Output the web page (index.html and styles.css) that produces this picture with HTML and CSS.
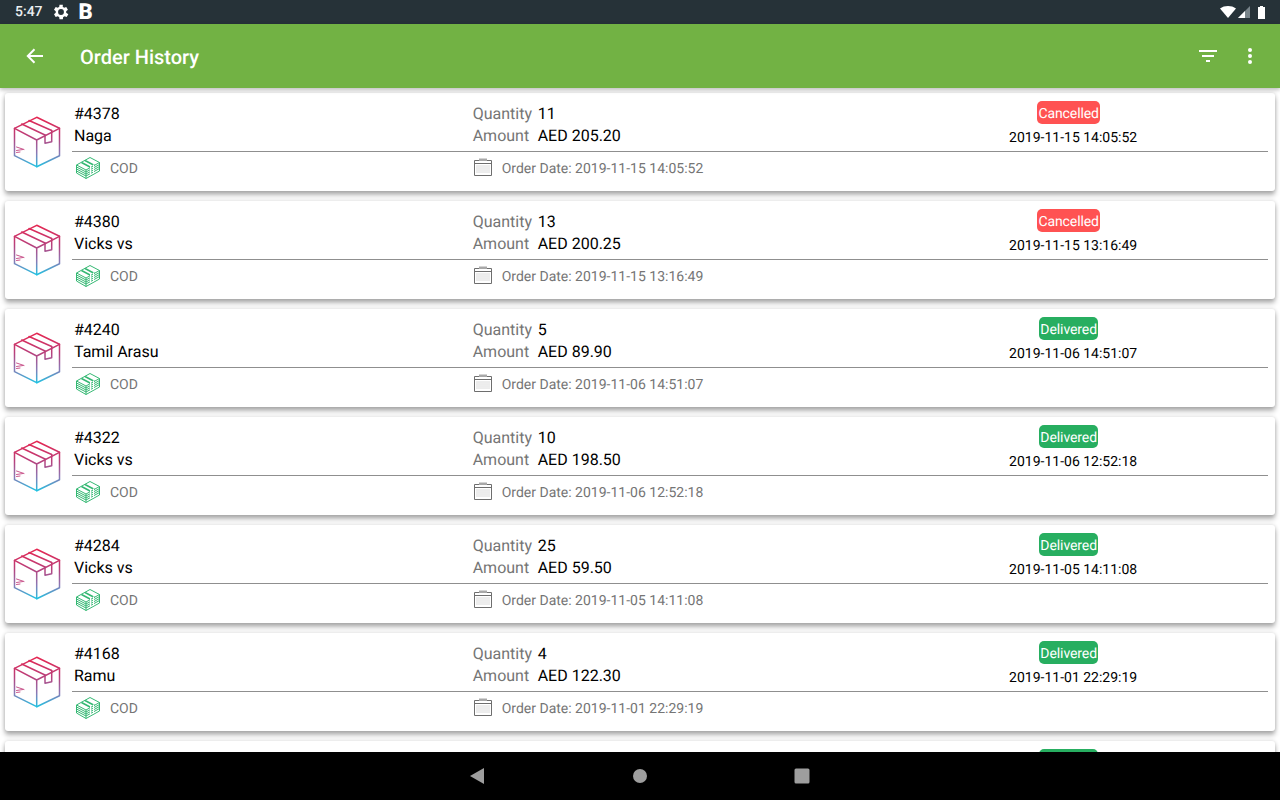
FILE: index.html
```html
<!DOCTYPE html>
<html lang="en">
<head>
<meta charset="utf-8">
<title>Order History</title>
<link rel="stylesheet" href="styles.css">
</head>
<body>
<svg class="defs" width="0" height="0" aria-hidden="true">
  <defs>
    <linearGradient id="boxGrad" gradientUnits="userSpaceOnUse" x1="0" y1="2" x2="0" y2="52">
      <stop offset="0" stop-color="#e6244f"/>
      <stop offset="0.4" stop-color="#b8407c"/>
      <stop offset="0.72" stop-color="#8a78b4"/>
      <stop offset="1" stop-color="#1fc3e2"/>
    </linearGradient>
    <symbol id="box" viewBox="0 0 50 54">
      <g fill="none" stroke="url(#boxGrad)" stroke-width="1.5" stroke-linejoin="round" stroke-linecap="round">
        <path d="M24.700 2.300 47.500 13.300V40.700L24.700 51.700 2.500 40.700V13.300Z"/>
        <path d="M2.500 13.300 24.700 25 47.500 13.300M24.700 25V51.700"/>
        <path d="M9.700 9 33 20M17 5.500 39.700 15.500"/>
        <path d="M33 20V28.300L39.700 26.700V15.500"/>
      </g>
      <g fill="none" stroke="#c9558c" stroke-width="1" stroke-linecap="round">
        <path d="M4.500 32 12 34.500M4.500 35.500 11 34.500M4.500 37.500 8 37"/>
      </g>
    </symbol>
    <symbol id="cash" viewBox="0 0 24 22">
      <g fill="none" stroke="#35b873" stroke-width="1">
        <path d="M.5 8 14 .5 23.500 5.500 10 13Z"/>
        <path d="M.5 8V16L10 21.500 23.500 14V5.500"/>
        <path d="M.5 10 10 15 23.500 7.500M.5 12 10 17 23.500 9.500M.5 14 10 19 23.500 11.500M10 13V21.500"/>
        <path d="M5.500 5.500 15 10.500M9 3.500 18.500 8.500" stroke-width="1.5"/>
        <path d="M14.500 9V18M17.500 7.500V16.500" stroke="#fff" stroke-width="1"/>
      </g>
    </symbol>
    <symbol id="cal" viewBox="0 0 18 18">
      <path d="M.5 2.500H17.500V17.500H.5Z" fill="#fff" stroke="#6e6e6e"/>
      <path d="M0 5.500H18" stroke="#6e6e6e"/>
      <path d="M5 .5H13V3H5Z" fill="#a8a8a8"/>
      <path d="M2.500 8H15.500M2.500 10H15.500M2.500 12H15.500M2.500 14H15.500" stroke="#b4b4b4" stroke-dasharray="1 1"/>
    </symbol>
  </defs>
</svg>

<header class="status-bar">
  <span class="clock">5:47</span>
  <svg class="gear" width="20" height="20" viewBox="0 0 24 24"><path fill="#fff" d="M19.400 13a7.500 7.500 0 0 0 0-2l2.100-1.600-2-3.500-2.500 1a7.500 7.500 0 0 0-1.700-1L15.400 3.200h-4L11 5.900a7.500 7.500 0 0 0-1.700 1l-2.500-1-2 3.500L6.900 11a7.500 7.500 0 0 0 0 2l-2.100 1.600 2 3.500 2.500-1a7.500 7.500 0 0 0 1.700 1l.4 2.700h4l.4-2.700a7.500 7.500 0 0 0 1.700-1l2.500 1 2-3.500ZM13.200 15.500a3.500 3.500 0 1 1 0-7 3.500 3.500 0 0 1 0 7Z" transform="translate(-1.200)"/></svg>
  <span class="brand-b">B</span>
  <span class="status-right">
    <svg width="16" height="12" viewBox="0 0 16 12"><path fill="#fff" d="M0 2.500C4.500-.8 11.500-.8 16 2.500L8 12Z"/></svg>
    <svg class="signal" width="12" height="12" viewBox="0 0 12 12"><path fill="#78848a" d="M12 0V12H0Z"/><path fill="#fff" d="M7 5V12H0Z"/></svg>
    <svg class="battery" width="7" height="13" viewBox="0 0 7 13"><path fill="#fff" d="M2 0H5V1H7V13H0V1H2Z"/></svg>
  </span>
</header>

<header class="app-bar">
  <svg class="back" width="18" height="16" viewBox="0 0 18 16"><path fill="none" stroke="#fff" stroke-width="2" d="M17 8H2M8.500 1.200 1.800 8l6.700 6.800"/></svg>
  <h1 class="title">Order History</h1>
  <svg class="filter" width="18" height="12" viewBox="0 0 18 12"><path fill="#fff" d="M0 0H18V2H0ZM3 5H15V7H3ZM7 10H11V12H7Z"/></svg>
  <svg class="more" width="4" height="16" viewBox="0 0 4 16"><circle cx="2" cy="2" r="2" fill="#fff"/><circle cx="2" cy="8" r="2" fill="#fff"/><circle cx="2" cy="14" r="2" fill="#fff"/></svg>
</header>

<main class="orders">
  <article class="card">
    <svg class="box-icon"><use href="#box"/></svg>
    <div class="body">
      <div class="top">
        <div class="who"><div>#4378</div><div>Naga</div></div>
        <div class="figures">
          <div><span class="label">Quantity</span>11</div>
          <div><span class="label">Amount</span>AED 205.20</div>
        </div>
        <div class="state"><span class="badge cancelled">Cancelled</span><span class="stamp">2019-11-15 14:05:52</span></div>
      </div>
      <div class="bottom">
        <div class="pay"><svg class="cash-icon"><use href="#cash"/></svg>COD</div>
        <div class="date"><svg class="cal-icon"><use href="#cal"/></svg>Order Date: 2019-11-15 14:05:52</div>
      </div>
    </div>
  </article>
  <article class="card">
    <svg class="box-icon"><use href="#box"/></svg>
    <div class="body">
      <div class="top">
        <div class="who"><div>#4380</div><div>Vicks vs</div></div>
        <div class="figures">
          <div><span class="label">Quantity</span>13</div>
          <div><span class="label">Amount</span>AED 200.25</div>
        </div>
        <div class="state"><span class="badge cancelled">Cancelled</span><span class="stamp">2019-11-15 13:16:49</span></div>
      </div>
      <div class="bottom">
        <div class="pay"><svg class="cash-icon"><use href="#cash"/></svg>COD</div>
        <div class="date"><svg class="cal-icon"><use href="#cal"/></svg>Order Date: 2019-11-15 13:16:49</div>
      </div>
    </div>
  </article>
  <article class="card">
    <svg class="box-icon"><use href="#box"/></svg>
    <div class="body">
      <div class="top">
        <div class="who"><div>#4240</div><div>Tamil Arasu</div></div>
        <div class="figures">
          <div><span class="label">Quantity</span>5</div>
          <div><span class="label">Amount</span>AED 89.90</div>
        </div>
        <div class="state"><span class="badge delivered">Delivered</span><span class="stamp">2019-11-06 14:51:07</span></div>
      </div>
      <div class="bottom">
        <div class="pay"><svg class="cash-icon"><use href="#cash"/></svg>COD</div>
        <div class="date"><svg class="cal-icon"><use href="#cal"/></svg>Order Date: 2019-11-06 14:51:07</div>
      </div>
    </div>
  </article>
  <article class="card">
    <svg class="box-icon"><use href="#box"/></svg>
    <div class="body">
      <div class="top">
        <div class="who"><div>#4322</div><div>Vicks vs</div></div>
        <div class="figures">
          <div><span class="label">Quantity</span>10</div>
          <div><span class="label">Amount</span>AED 198.50</div>
        </div>
        <div class="state"><span class="badge delivered">Delivered</span><span class="stamp">2019-11-06 12:52:18</span></div>
      </div>
      <div class="bottom">
        <div class="pay"><svg class="cash-icon"><use href="#cash"/></svg>COD</div>
        <div class="date"><svg class="cal-icon"><use href="#cal"/></svg>Order Date: 2019-11-06 12:52:18</div>
      </div>
    </div>
  </article>
  <article class="card">
    <svg class="box-icon"><use href="#box"/></svg>
    <div class="body">
      <div class="top">
        <div class="who"><div>#4284</div><div>Vicks vs</div></div>
        <div class="figures">
          <div><span class="label">Quantity</span>25</div>
          <div><span class="label">Amount</span>AED 59.50</div>
        </div>
        <div class="state"><span class="badge delivered">Delivered</span><span class="stamp">2019-11-05 14:11:08</span></div>
      </div>
      <div class="bottom">
        <div class="pay"><svg class="cash-icon"><use href="#cash"/></svg>COD</div>
        <div class="date"><svg class="cal-icon"><use href="#cal"/></svg>Order Date: 2019-11-05 14:11:08</div>
      </div>
    </div>
  </article>
  <article class="card">
    <svg class="box-icon"><use href="#box"/></svg>
    <div class="body">
      <div class="top">
        <div class="who"><div>#4168</div><div>Ramu</div></div>
        <div class="figures">
          <div><span class="label">Quantity</span>4</div>
          <div><span class="label">Amount</span>AED 122.30</div>
        </div>
        <div class="state"><span class="badge delivered">Delivered</span><span class="stamp">2019-11-01 22:29:19</span></div>
      </div>
      <div class="bottom">
        <div class="pay"><svg class="cash-icon"><use href="#cash"/></svg>COD</div>
        <div class="date"><svg class="cal-icon"><use href="#cal"/></svg>Order Date: 2019-11-01 22:29:19</div>
      </div>
    </div>
  </article>
  <article class="card">
    <div class="body">
      <div class="top">
        <div class="who"></div>
        <div class="figures"></div>
        <div class="state"><span class="badge delivered">Delivered</span></div>
      </div>
    </div>
  </article>
</main>

<footer class="nav-bar">
  <svg width="16" height="16" viewBox="0 0 16 16"><path fill="#9e9e9e" d="M14 0V16L0 8Z"/></svg>
  <svg width="14" height="14" viewBox="0 0 14 14"><circle cx="7" cy="7" r="7" fill="#9e9e9e"/></svg>
  <svg width="16" height="16" viewBox="0 0 16 16"><rect x="0.500" y="0.500" width="15" height="15" rx="1.500" fill="#9e9e9e"/></svg>
</footer>
</body>
</html>
```
FILE: styles.css
```css
* { box-sizing: border-box; }

html, body { height: 100%; }

body {
  margin: 0;
  width: 1280px;
  height: 800px;
  overflow: hidden;
  display: flex;
  flex-direction: column;
  background: #fff;
  font-family: Roboto, "Liberation Sans", sans-serif;
  color: #000;
  text-rendering: geometricPrecision;
}

.defs { position: absolute; }

.status-bar {
  flex: 0 0 24px;
  height: 24px;
  min-height: 0;
  display: flex;
  align-items: center;
  padding: 0 15px;
  background: #263238;
  color: #fff;
}

.clock { font-size: 14px; font-weight: 500; color: #eceff1; }
.gear { margin-left: 8px; }
.brand-b { margin: 2px 0 0 8px; font-size: 22px; line-height: 22px; font-weight: 900; }

.status-right {
  margin-left: auto;
  display: flex;
  align-items: center;
}

.signal { margin-left: 2px; }
.battery { margin-left: 8px; }

.app-bar {
  position: relative;
  z-index: 1;
  flex: 0 0 64px;
  display: flex;
  align-items: center;
  padding: 0 28px 0 26px;
  background: #72b244;
  box-shadow: 0 2px 4px rgba(0, 0, 0, 0.25);
}

.title {
  margin: 2px 0 0 36px;
  font-size: 20px;
  font-weight: 500;
  color: #fff;
}

.filter { margin-left: auto; }
.more { margin-left: 31px; }

.orders {
  flex: 1;
  min-height: 0;
  overflow: hidden;
  display: flex;
  flex-direction: column;
  gap: 10px;
  padding: 5px 5px 0;
  background: #fff;
}

.card {
  flex: 0 0 98px;
  display: flex;
  background: #fff;
  border-radius: 3px;
  box-shadow: 0 4px 5px rgba(0, 0, 0, 0.3), 0 0 4px rgba(0, 0, 0, 0.16);
}

.box-icon {
  flex: 0 0 50px;
  width: 50px;
  height: 54px;
  margin: 22px 10px 0 7px;
}

.body {
  flex: 1;
  margin-left: 0;
  padding-right: 7px;
  min-width: 0;
}

.card:last-child .body { padding-left: 67px; }

.top {
  height: 59px;
  display: grid;
  grid-template-columns: repeat(3, 1fr);
  border-bottom: 1px solid #8f8f8f;
  font-size: 16px;
  line-height: 22px;
}

.who { padding: 10px 0 0 2px; }
.figures { padding: 10px 0 0 2px; }

.label {
  display: inline-block;
  width: 65px;
  color: #757575;
}

.state {
  display: flex;
  flex-direction: column;
  align-items: center;
  padding-top: 8px;
}

.badge {
  height: 23px;
  padding: 0 1.5px;
  border-radius: 5px;
  font-size: 14px;
  letter-spacing: -0.1px;
  line-height: 27px;
  color: #fff;
}

.cancelled { background: #ff5252; }
.delivered { background: #27ae60; }

.stamp {
  margin: 4px 0 0 9px;
  font-size: 14px;
  line-height: 20px;
}

.bottom {
  display: grid;
  grid-template-columns: repeat(3, 1fr);
  height: 38px;
  font-size: 14px;
  color: #757575;
}

.pay, .date {
  display: flex;
  align-items: flex-start;
  line-height: 20px;
  padding-top: 7px;
}

.date { grid-column: 2 / 4; padding-left: 3px; }

.pay { padding-left: 4px; }

.cash-icon {
  width: 24px;
  height: 22px;
  margin: -2px 10px 0 0;
  flex: none;
}

.cal-icon {
  width: 18px;
  height: 18px;
  margin: -1px 10px 0 0;
  flex: none;
}

.nav-bar {
  position: relative;
  flex: 0 0 48px;
  display: grid;
  grid-template-columns: 16px 14px 16px;
  justify-content: center;
  column-gap: 147px;
  align-items: center;
  background: #000;
}
```
